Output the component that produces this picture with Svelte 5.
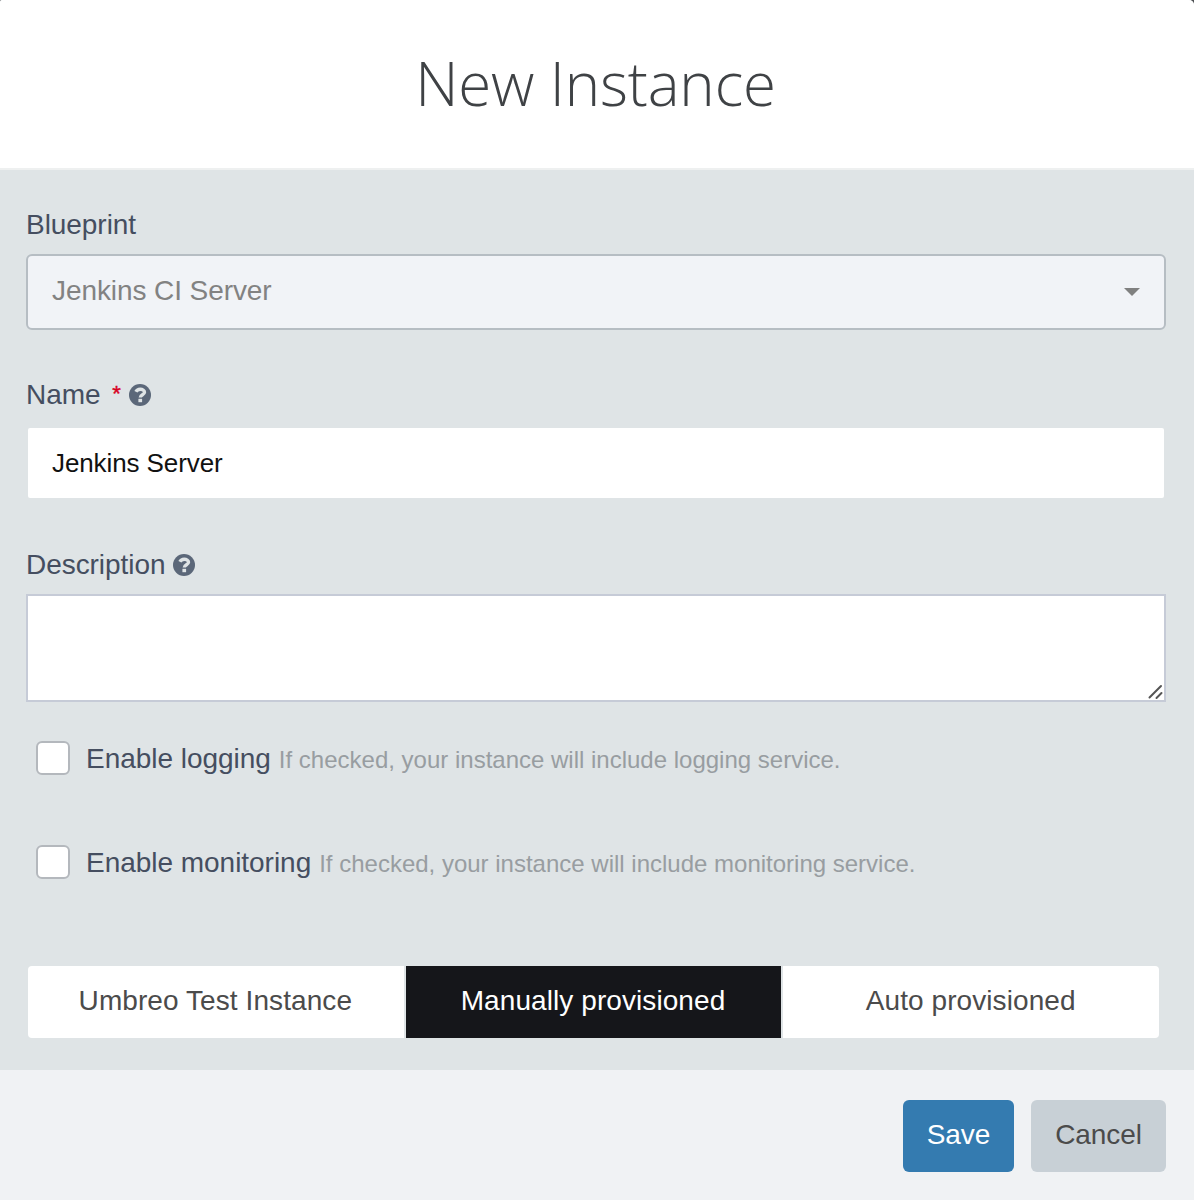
<script>
  let name = $state('Jenkins Server');
  let description = $state('');
  const options = [
    { id: 'logging', label: 'Enable logging', hint: 'If checked, your instance will include logging service.' },
    { id: 'monitoring', label: 'Enable monitoring', hint: 'If checked, your instance will include monitoring service.' }
  ];
  const modes = ['Umbreo Test Instance', 'Manually provisioned', 'Auto provisioned'];
  let mode = $state('Manually provisioned');
</script>

{#snippet help()}
  <svg class="help" viewBox="0 0 22 22" aria-hidden="true">
    <circle cx="11" cy="11" r="11" />
    <path class="hook" d="M6.9 7.8C7.8 6 9.3 5.2 11.2 5.2c2.3 0 4.3 1.2 4.3 3.1 0 2.5-4.2 2.4-4.2 5.3" />
    <path class="dot" d="M9.4 14.8h3.7v3.4H9.4z" />
  </svg>
{/snippet}

<div class="backdrop">
  <main class="modal">
    <header><h1>New Instance</h1></header>
    <section class="body">
      <div class="label first">Blueprint</div>
      <div class="select">
        <span>Jenkins CI Server</span>
        <svg class="caret" viewBox="0 0 16 8"><path d="M0 0h16L8 8z" /></svg>
      </div>
      <div class="label second">Name <span class="required">*</span>{@render help()}</div>
      <input class="name" type="text" bind:value={name} />
      <div class="label third">Description {@render help()}</div>
      <div class="area">
        <textarea bind:value={description}></textarea>
        <svg class="grip" viewBox="0 0 16 16"><path d="M1.5 13.5L13 2M8.5 14l5-5" /></svg>
      </div>
      <div class="checks">
        {#each options as option (option.id)}
          <label class="check">
            <input type="checkbox" />
            <span class="text">{option.label}</span>
            <span class="hint">{option.hint}</span>
          </label>
        {/each}
      </div>
      <div class="modes">
        {#each modes as item (item)}
          <button class:active={item === mode} onclick={() => (mode = item)}>{item}</button>
        {/each}
      </div>
    </section>
    <footer>
      <button class="save">Save</button>
      <button class="cancel">Cancel</button>
    </footer>
  </main>
</div>

<style>
  :global(body) { margin: 0; }
  .backdrop, .backdrop * { box-sizing: border-box; }
  .backdrop { background: #4d5053; font-family: "Liberation Sans", Arial, sans-serif; }
  .modal { height: 1200px; display: flex; flex-direction: column; border-radius: 2px 5px 0 0; overflow: hidden; background: #dfe4e6; }
  header { height: 170px; background: #fff; border-bottom: 2px solid #eef0f0; display: flex; justify-content: center; padding: 41px 3px 0 0; }
  h1 { margin: 0; font: 300 60px/84px "Open Sans", sans-serif; letter-spacing: -0.15px; color: #3f4245; white-space: nowrap; }
  .body { height: 900px; padding: 38px 28px 0 26px; }
  .label { display: flex; align-items: center; height: 34px; font-size: 28px; letter-spacing: -0.05px; color: #454e60; white-space: pre; }
  .select { display: flex; align-items: center; justify-content: space-between; height: 76px; margin-top: 12px; padding: 0 24px 2px; border: 2px solid #b6bdc3; border-radius: 6px; background: #f1f3f7; color: #828282; font-size: 28px; letter-spacing: -0.08px; }
  .caret { width: 16px; height: 8px; fill: #808080; margin-top: 2px; }
  .second { margin-top: 48px; }
  .required { color: #d8001f; font-size: 22px; -webkit-text-stroke: 0.4px #d8001f; margin: 0 8px 2px 4px; }
  .help { width: 22px; height: 22px; fill: #5b6779; }
  .help .hook { fill: none; stroke: #dfe4e6; stroke-width: 3.4; }
  .help .dot { fill: #dfe4e6; }
  .name { display: block; width: 1136px; height: 70px; margin: 16px 2px 0; padding: 0 24px; border: 0; border-radius: 2px; color: #111; font: 26px "Liberation Sans", sans-serif; letter-spacing: -0.1px; background: #fff; outline: 0; }
  .third { margin-top: 50px; }
  .area { position: relative; height: 108px; margin-top: 12px; }
  textarea { display: block; width: 100%; height: 108px; border: 2px solid #c6cbd7; resize: none; background: #fff; outline: 0; }
  .grip { position: absolute; right: 2px; bottom: 2px; width: 16px; height: 16px; fill: none; stroke: #555; stroke-width: 2; stroke-linecap: round; }
  .checks { display: flex; flex-direction: column; gap: 68px; margin-top: 38px; padding-left: 10px; }
  .check { display: flex; align-items: center; height: 36px; white-space: nowrap; }
  .check input { appearance: none; width: 34px; height: 34px; margin: 0 16px 0 0; border: 2px solid #b4b8bd; border-radius: 6px; background: #fff; }
  .text { margin-top: 2px; font-size: 28px; letter-spacing: -0.03px; color: #454e60; }
  .hint { margin: 4px 0 0 8px; font-size: 24px; color: #989da1; }
  .modes { display: flex; gap: 2px; width: 1131px; height: 72px; margin: 86px 0 0 2px; border-radius: 4px; overflow: hidden; }
  button { font: 28px "Liberation Sans", sans-serif; letter-spacing: 0.08px; border: 0; white-space: nowrap; }
  .modes button { flex: 1; padding: 0 1px 2px 0; color: #4b4b4b; background: #fff; }
  .modes .active { background: #15161a; color: #fff; }
  footer { height: 130px; padding: 30px 28px 0; display: flex; justify-content: flex-end; gap: 17px; background: #f0f2f4; }
  footer button { height: 72px; padding: 0 0 2px; border-radius: 6px; letter-spacing: -0.1px; }
  .save { width: 111px; background: #347bb0; color: #fff; }
  .cancel { width: 135px; background: #c8d0d6; color: #4b4b4b; }
</style>
